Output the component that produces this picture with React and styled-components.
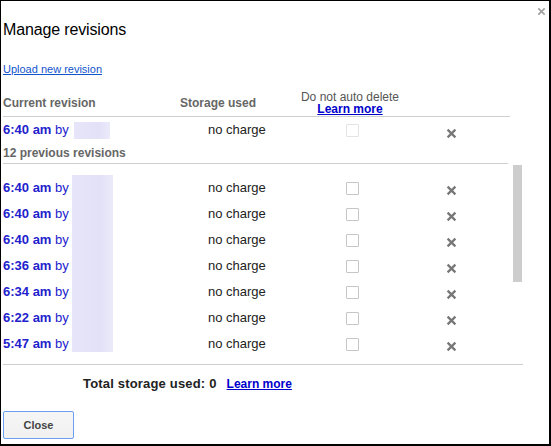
import React from "react";
import styled, { createGlobalStyle } from "styled-components";

const Global = createGlobalStyle`
  html, body { margin: 0; padding: 0; background: #fff; }
  body { font-family: "Liberation Sans", Arial, sans-serif; }
`;

const Dialog = styled.div`
  position: relative;
  box-sizing: border-box;
  width: 551px;
  height: 446px;
  border-style: solid;
  border-color: #000;
  border-width: 1px 2px 2px 1px;
  background: #fff;
  padding-left: 2px;
  display: flex;
  flex-direction: column;
  align-items: flex-start;
`;

const CloseCorner = styled.button`
  position: absolute;
  top: 5px;
  right: 3px;
  width: 10px;
  height: 10px;
  padding: 0;
  border: 0;
  background: transparent;
  display: flex;
  align-items: center;
  justify-content: center;
  cursor: pointer;
`;

const Title = styled.h1`
  margin: 19px 0 0;
  font-size: 16px;
  line-height: 20px;
  font-weight: normal;
  letter-spacing: -0.15px;
  color: #000;
`;

const UploadLink = styled.a`
  margin-top: 23px;
  font-size: 11px;
  line-height: 13px;
  color: #1155cc;
  text-decoration: underline;
  cursor: pointer;
`;

const Grid = styled.div`
  display: grid;
  grid-template-columns: 175px 122px 100px 103px;
  align-items: center;
`;

const HeaderRow = styled(Grid)`
  margin-top: 15px;
  width: 507px;
  height: 24px;
  padding-bottom: 1px;
  border-bottom: 1px solid #cfcfcf;
`;

const HeadCell = styled.div`
  font-size: 12px;
  line-height: 12px;
  font-weight: ${(p) => (p.$regular ? "normal" : "bold")};
  color: ${(p) => (p.$regular ? "#555" : "#666")};
  padding-left: ${(p) => p.$pl || 0}px;
  text-align: ${(p) => (p.$center ? "center" : "left")};
  white-space: nowrap;
`;

const HeadLink = styled.a`
  display: block;
  font-weight: bold;
  color: #0000cc;
  text-decoration: underline;
  cursor: pointer;
`;

const Row = styled(Grid)`
  width: 500px;
  height: 26px;
  align-items: stretch;
`;

const NameCell = styled.div`
  display: flex;
  align-items: center;
  font-size: 13px;
  line-height: 16px;
  color: #2222cc;
  white-space: nowrap;
`;

const Time = styled.b`
  font-weight: bold;
`;

const By = styled.span`
  white-space: pre;
`;

const Redacted = styled.span`
  display: inline-block;
  width: ${(p) => p.$w}px;
  height: ${(p) => p.$h}px;
  margin-left: ${(p) => p.$ml || 0}px;
  align-self: ${(p) => (p.$top ? "flex-start" : "center")};
  background: linear-gradient(90deg, #e7e5f9 0%, #e3e1f7 70%, #ebeafa 100%);
`;

const Storage = styled.div`
  display: flex;
  align-items: center;
  padding-left: 30px;
  font-size: 13px;
  line-height: 16px;
  color: #222;
`;

const CheckCell = styled.div`
  display: flex;
  align-items: center;
  justify-content: center;
  padding-left: 4px;
`;

const Check = styled.span`
  display: block;
  box-sizing: border-box;
  width: 13px;
  height: 13px;
  border: 1px solid ${(p) => (p.$disabled ? "#e3e3e3" : "#c6c6c6")};
  border-radius: 1px;
  background: #fff;
`;

const RemoveCell = styled.div`
  display: flex;
  align-items: center;
  justify-content: center;
  padding-top: ${(p) => p.$offset || 6}px;
`;

const LabelRow = styled.div`
  box-sizing: border-box;
  width: 505px;
  height: 21px;
  padding-top: 3px;
  border-bottom: 1px solid #cfcfcf;
  font-size: 12px;
  line-height: 14px;
  font-weight: bold;
  color: #666;
`;

const ScrollArea = styled.div`
  display: flex;
  width: 520px;
  height: 200px;
  border-bottom: 1px solid #cfcfcf;
`;

const Viewport = styled.div`
  flex: 1;
  overflow: hidden;
`;

const ScrollTrack = styled.div`
  width: 10px;
  padding-top: 1px;
`;

const ScrollThumb = styled.div`
  width: 9px;
  background: #cdcdcd;
`;

const ScrollBody = styled.div`
  padding: 11px 0 16px;
`;

const Footer = styled.div`
  margin-top: 11px;
  padding-left: 80px;
  display: flex;
  align-items: baseline;
  line-height: 16px;
`;

const Total = styled.span`
  font-size: 13px;
  font-weight: bold;
  letter-spacing: 0.18px;
  color: #222;
`;

const FootLink = styled.a`
  margin-left: 10px;
  font-size: 12px;
  font-weight: bold;
  color: #0000cc;
  text-decoration: underline;
  cursor: pointer;
`;

const CloseButton = styled.button`
  margin-top: 19px;
  margin-left: 0;
  box-sizing: border-box;
  width: 71px;
  height: 28px;
  border: 1px solid #6c9ff0;
  border-radius: 2px;
  background: linear-gradient(#f6f6f6, #f0f0f0);
  font-family: "Liberation Sans", Arial, sans-serif;
  font-size: 11px;
  font-weight: bold;
  color: #444;
  padding: 0;
  cursor: pointer;
`;

const XIcon = ({ size = 11, color = "#777", w = 2.2 }) => (
  <svg width={size} height={size} viewBox="0 0 11 11" aria-hidden="true">
    <path
      d="M1.6 1.6 L9.4 9.4 M9.4 1.6 L1.6 9.4"
      stroke={color}
      strokeWidth={w}
      strokeLinecap="butt"
      fill="none"
    />
  </svg>
);

const revisions = [
  "6:40 am",
  "6:40 am",
  "6:40 am",
  "6:36 am",
  "6:34 am",
  "6:22 am",
  "5:47 am",
  "5:41 am",
  "5:38 am",
  "5:30 am",
  "5:22 am",
  "5:15 am",
];

const viewportHeight = 200;
const contentHeight = 11 + revisions.length * 26 + 16;
const thumbHeight = Math.round((viewportHeight * viewportHeight) / contentHeight) - 1;

export default function App() {
  return (
    <>
      <Global />
      <Dialog>
        <CloseCorner aria-label="Close dialog">
          <XIcon size={9} color="#a0a0a0" w={2} />
        </CloseCorner>
        <Title>Manage revisions</Title>
        <UploadLink>Upload new revision</UploadLink>

        <HeaderRow>
          <HeadCell>Current revision</HeadCell>
          <HeadCell $pl={2}>Storage used</HeadCell>
          <HeadCell $regular $center>
            Do not auto delete
            <HeadLink>Learn more</HeadLink>
          </HeadCell>
          <div />
        </HeaderRow>

        <Row>
          <NameCell>
            <Time>6:40 am</Time>
            <By> by</By>
            <Redacted $w={36} $h={17} $ml={5} />
          </NameCell>
          <Storage>no charge</Storage>
          <CheckCell>
            <Check $disabled />
          </CheckCell>
          <RemoveCell $offset={7}>
            <XIcon />
          </RemoveCell>
        </Row>

        <LabelRow>12 previous revisions</LabelRow>

        <ScrollArea>
          <Viewport>
            <ScrollBody>
              {revisions.map((t, i) => (
                <Row key={i}>
                  <NameCell>
                    <Time>{t}</Time>
                    <By> by </By>
                    {i < 7 && <Redacted $w={41} $h={i === 6 ? 21 : 26} $top />}
                  </NameCell>
                  <Storage>no charge</Storage>
                  <CheckCell>
                    <Check />
                  </CheckCell>
                  <RemoveCell $offset={5}>
                    <XIcon />
                  </RemoveCell>
                </Row>
              ))}
            </ScrollBody>
          </Viewport>
          <ScrollTrack>
            <ScrollThumb style={{ height: thumbHeight }} />
          </ScrollTrack>
        </ScrollArea>

        <Footer>
          <Total>Total storage used: 0</Total>
          <FootLink>Learn more</FootLink>
        </Footer>

        <CloseButton>Close</CloseButton>
      </Dialog>
    </>
  );
}
